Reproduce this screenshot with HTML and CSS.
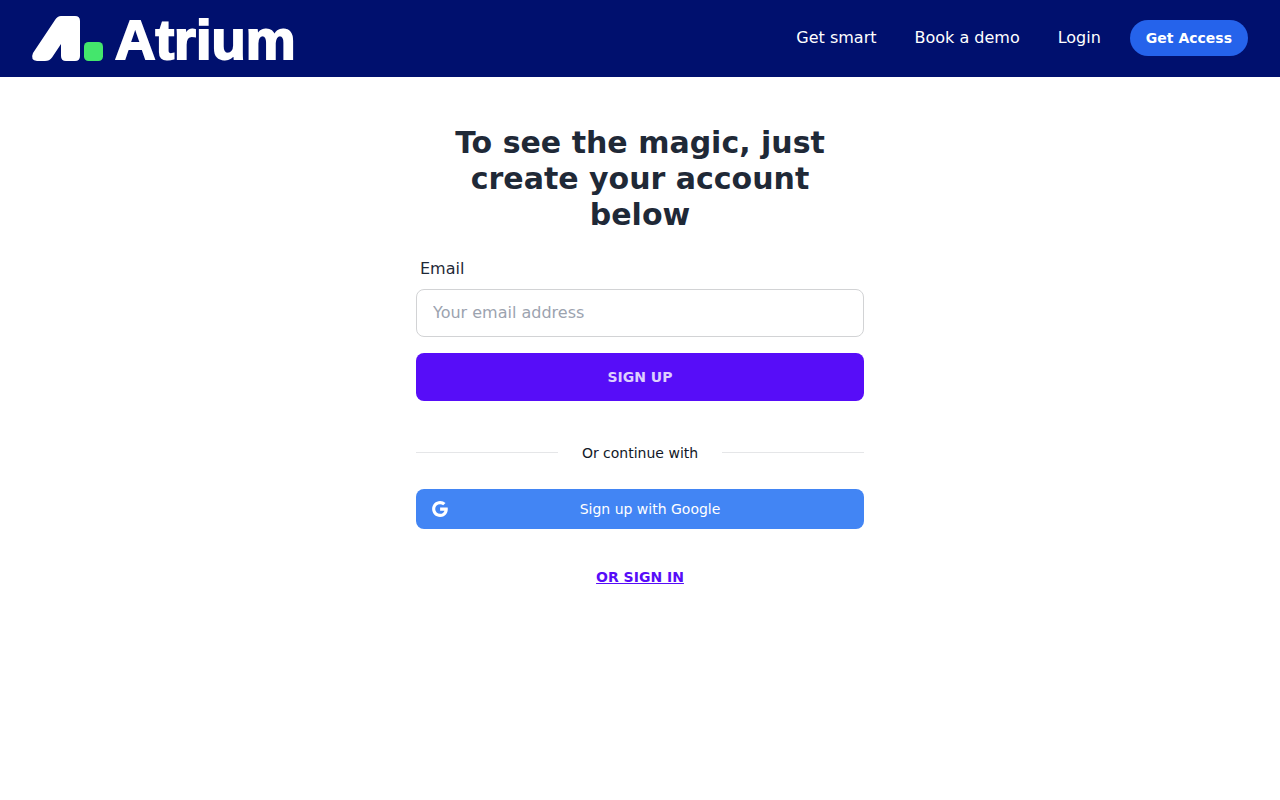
FILE: index.html
```html
<!DOCTYPE html>
<html lang="en">
<head>
    <meta charset="UTF-8">
    <meta name="viewport" content="width=device-width, initial-scale=1.0">
    <title>Atrium - Sign up</title>
    <link rel="stylesheet" href="styles.css">
</head>
<body>
    <header class="header">
        <a href="#" class="logo">
            <svg width="264" height="45" viewBox="0 0 264 45">
                <path fill="#fff" d="M29 0H43Q48 0 48 5V40Q48 45 43 45H34Q29 45 29 40V28L20 41.500Q17.500 45 13 45H5Q-2 44 1 37L23 4Q25.500 0 29 0Z"/>
                <rect x="52" y="26" width="19" height="19" rx="4.500" fill="#44e66c"/>
                <text class="logo-text" x="83" y="43">Atrium</text>
            </svg>
        </a>
        <nav class="nav">
            <a href="#" class="nav-link">Get smart</a>
            <a href="#" class="nav-link">Book a demo</a>
            <a href="#" class="nav-link">Login</a>
            <button type="button" class="btn-access">Get Access</button>
        </nav>
    </header>

    <main class="container">
        <h1>To see the magic, just create your account below</h1>

        <!-- Email sign up -->
        <form class="form">
            <label for="email">Email</label>
            <input type="email" id="email" placeholder="Your email address" required>
            <button type="submit" class="btn-signup">SIGN UP</button>
        </form>

        <div class="divider">Or continue with</div>

        <button type="button" class="btn-google">
            <svg width="16" height="16" viewBox="2.400 2 20 20" aria-hidden="true">
                <path fill="#fff" d="M12.545 10.239v3.821h5.445c-.712 2.315-2.647 3.972-5.445 3.972a6.033 6.033 0 1 1 0-12.064c1.498 0 2.866.549 3.921 1.453l2.814-2.814A9.969 9.969 0 0 0 12.545 2C7.021 2 2.543 6.477 2.543 12s4.478 10 10.002 10c8.396 0 10.249-7.850 9.426-11.748z"/>
            </svg>
            <span>Sign up with Google</span>
        </button>

        <a href="#" class="signin-link">OR SIGN IN</a>
    </main>
</body>
</html>
```
FILE: styles.css
```css
* {
    margin: 0;
    padding: 0;
    box-sizing: border-box;
}

body {
    background: #fff;
    color: #1f2937;
    font-family: "DejaVu Sans", sans-serif;
    font-size: 16px;
    line-height: 24px;
}

button,
input {
    font: inherit;
}

button {
    border: none;
    cursor: pointer;
}

.header {
    display: flex;
    justify-content: space-between;
    align-items: center;
    padding: 16px 32px;
    background: #00106e;
}

.logo svg {
    display: block;
    overflow: visible;
}

.logo-text {
    fill: #fff;
    stroke: #fff;
    stroke-width: 2px;
    font-family: "Liberation Sans", Arial, sans-serif;
    font-size: 56px;
    font-weight: 700;
}

.nav {
    display: flex;
    align-items: center;
    gap: 38px;
    margin-bottom: 1px;
}

.nav-link {
    color: #fff;
    text-decoration: none;
}

.btn-access {
    height: 36px;
    margin-left: -9px;
    padding: 0 16px;
    border-radius: 18px;
    background: #2563eb;
    color: #fff;
    font-size: 14px;
    font-weight: 700;
}

.container {
    display: flex;
    flex-direction: column;
    max-width: 480px;
    margin: 0 auto;
    padding: 48px 16px;
}

h1 {
    margin-bottom: 20px;
    font-size: 30px;
    font-weight: 700;
    line-height: 36px;
    text-align: center;
}

.form {
    display: flex;
    flex-direction: column;
}

.form label {
    padding: 4px 4px 8px;
}

.form input {
    height: 48px;
    margin-bottom: 16px;
    padding: 0 16px 2px;
    border: 1px solid #d2d3d5;
    border-radius: 8px;
    background: #fff;
    color: #1f2937;
}

.form input::placeholder {
    color: #9ca3af;
}

.btn-signup {
    height: 48px;
    border-radius: 8px;
    background: #570df8;
    color: #ddcffe;
    font-size: 14px;
    font-weight: 700;
}

.divider {
    display: flex;
    align-items: center;
    gap: 24px;
    margin: 40px 0 24px;
    color: #111827;
    font-size: 14px;
}

.divider::before,
.divider::after {
    content: "";
    flex: 1;
    height: 1px;
    margin-bottom: 1px;
    background: #e5e6e8;
}

.btn-google {
    display: flex;
    align-items: center;
    gap: 4px;
    height: 40px;
    padding: 0 16px;
    border-radius: 8px;
    background: #4285f4;
    color: #fff;
    font-size: 14px;
}

.btn-google span {
    flex: 1;
}

.signin-link {
    align-self: center;
    margin-top: 36px;
    color: #570df8;
    font-size: 14px;
    font-weight: 700;
}
```
